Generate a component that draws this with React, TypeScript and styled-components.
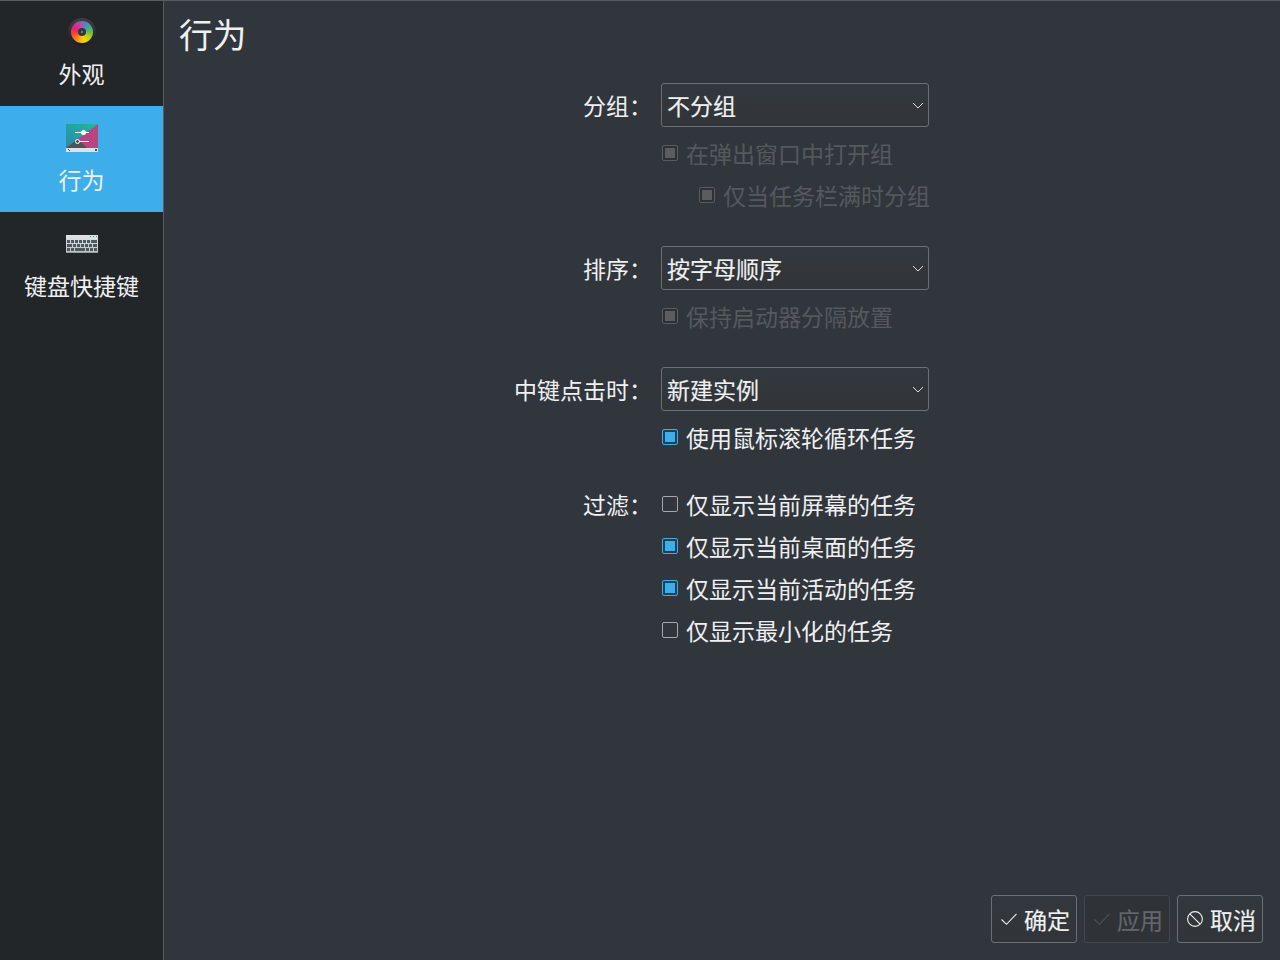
import React from "react";
import styled, { createGlobalStyle } from "styled-components";

const GlobalStyle = createGlobalStyle`
  * { box-sizing: border-box; }
  body {
    margin: 0;
    background: #31363d;
    color: #eff0f1;
    font-family: "Noto Sans CJK SC", sans-serif;
    font-size: 23px;
    line-height: 34px;
  }
`;

const Window = styled.div`
  display: flex;
  width: 1280px;
  height: 960px;
  overflow: hidden;
  border-top: 1px solid #575c60;
`;

const Sidebar = styled.nav`
  width: 164px;
  flex: none;
  background: #232629;
  border-right: 1px solid #575c60;
`;

const Category = styled.div<{ $active?: boolean; $first?: boolean }>`
  display: flex;
  flex-direction: column;
  align-items: center;
  gap: 8px;
  height: ${(p) => (p.$first ? 105 : 106)}px;
  padding-top: ${(p) => (p.$first ? 15 : 16)}px;
  background: ${(p) => (p.$active ? "#3daee9" : "transparent")};
`;

const CategoryIcon = styled.svg`
  display: block;
  width: 32px;
  height: 32px;
`;

const ColorDisc = styled.div`
  display: flex;
  align-items: center;
  justify-content: center;
  width: 32px;
  height: 32px;
`;

const DiscRim = styled.div`
  width: 28px;
  height: 28px;
  padding: 3px;
  border-radius: 50%;
  background: linear-gradient(#3b4045, #1d1f21);
`;

const DiscHue = styled.div`
  display: flex;
  align-items: center;
  justify-content: center;
  width: 22px;
  height: 22px;
  border-radius: 50%;
  background: conic-gradient(#8d63b8, #5c86b8 30deg, #3cae94 60deg, #6cbd45 90deg, #c3d210 130deg, #f2d508 165deg, #f9b80a 190deg, #fa7a1c 225deg, #f4433c 260deg, #ea1f72 295deg, #c43c9b 330deg, #8d63b8);
`;

const DiscHub = styled.div`
  width: 8px;
  height: 8px;
  border: 3px solid #33373b;
  border-radius: 50%;
  background: #8b9093;
`;

const Main = styled.main`
  display: flex;
  flex: 1;
  flex-direction: column;
`;

const Title = styled.h1`
  margin: 0;
  padding: 9px 0 0 15px;
  height: 82px;
  font-size: 33.7px;
  font-weight: 400;
  line-height: 48px;
`;

const Form = styled.div`
  display: grid;
  grid-template-columns: 488px 270px;
  column-gap: 9px;
  row-gap: 30px;
`;

const Label = styled.div<{ $compact?: boolean }>`
  height: ${(p) => (p.$compact ? 42 : 44)}px;
  line-height: ${(p) => (p.$compact ? 42 : 44)}px;
  text-align: right;
`;

const Group = styled.div`
  display: flex;
  flex-direction: column;
`;

const FilterLabel = styled(Label)`
  margin-top: -5px;
`;

const FilterGroup = styled(Group)`
  margin-top: -5px;
`;

const Select = styled.div`
  display: flex;
  align-items: center;
  justify-content: space-between;
  width: 268px;
  height: 44px;
  margin-bottom: 5px;
  padding: 0 4px 0 5px;
  border: 1px solid #6c7073;
  border-radius: 3px;
  background: linear-gradient(#33383e, #313539);
  -webkit-text-stroke: 0.15px currentColor;
`;

const Chevron = styled.svg`
  width: 12px;
  height: 8px;
  margin-top: 1px;
`;

const CheckRow = styled.div<{ $disabled?: boolean; $indent?: boolean }>`
  display: flex;
  align-items: center;
  gap: 8px;
  height: 42px;
  padding-left: ${(p) => (p.$indent ? 38 : 1)}px;
  color: ${(p) => (p.$disabled ? "#55595e" : "#eff0f1")};
  white-space: nowrap;
`;

const CheckText = styled.span`
  margin-top: -1px;
`;

const boxColors = {
  on: { border: "#3daee9", back: "#1c4258", fill: "#3daee9" },
  off: { border: "#a5a8aa", back: "transparent", fill: "transparent" },
  disabled: { border: "#585c60", back: "#2d3136", fill: "#595d60" },
};

type BoxState = keyof typeof boxColors;

const Box = styled.div<{ $state: BoxState }>`
  flex: none;
  width: 16px;
  height: 16px;
  padding: 2px;
  border: 1px solid ${(p) => boxColors[p.$state].border};
  border-radius: 2px;
  background: ${(p) => boxColors[p.$state].back};

  &::after {
    content: "";
    display: block;
    width: 10px;
    height: 10px;
    background: ${(p) => boxColors[p.$state].fill};
  }
`;

const Footer = styled.footer`
  display: flex;
  justify-content: flex-end;
  gap: 7px;
  margin-top: auto;
  padding: 0 17px 17px 0;
`;

const Button = styled.div<{ $disabled?: boolean }>`
  display: flex;
  align-items: center;
  gap: 7px;
  width: 86px;
  height: 48px;
  padding-left: 9px;
  border: 1px solid ${(p) => (p.$disabled ? "#42464b" : "#6c7073")};
  border-radius: 3px;
  background: ${(p) => (p.$disabled ? "#2f3338" : "linear-gradient(#33383e, #313539)")};
  color: ${(p) => (p.$disabled ? "#63676b" : "#eff0f1")};
  -webkit-text-stroke: 0.15px currentColor;
  white-space: nowrap;
`;

const ButtonIcon = styled.svg<{ $dim?: boolean }>`
  flex: none;
  width: 16px;
  height: 16px;
  opacity: ${(p) => (p.$dim ? 0.6 : 1)};
`;

const ButtonText = styled.span`
  margin-top: -1px;
`;

function BehaviorIcon() {
  return (
    <CategoryIcon viewBox="0 0 32 32">
      <defs>
        <linearGradient id="teal" x1="0" y1="1" x2="1" y2="0">
          <stop offset="0" stopColor="#2d87ad" />
          <stop offset="1" stopColor="#1abc9c" />
        </linearGradient>
      </defs>
      <path d="M0 2h32v24H0z" fill="url(#teal)" />
      <path d="M32 2v24H0z" fill="#b8457f" />
      <path d="M0 26 12 17l9 9z" fill="#4b555b" />
      <path d="M0 26h32v4H0z" fill="#dfe1e2" />
      <path d="M2 27h1v1h1v1H3v-1H2zM29 27h2v2h-2z" fill="#4d4d4d" />
      <path d="M9 10.5h14M13 19.5h10" stroke="#fff" />
      <circle cx="17.5" cy="10.5" r="2.5" fill="#fff" />
      <circle cx="11.5" cy="19.5" r="2" fill="none" stroke="#fff" />
    </CategoryIcon>
  );
}

const keyRows: [number, number[]][] = [
  [12, [1, 5, 9, 13, 17, 21, 25]],
  [16, [1, 7, 11, 15, 19, 23, 27]],
  [20, [1, 5, 9, 20, 24, 28]],
];

const keyWidths: Record<string, number> = {
  "12-25": 6,
  "16-1": 5,
  "16-27": 4,
  "20-9": 10,
};

function KeyboardIcon() {
  return (
    <CategoryIcon viewBox="0 0 32 32">
      <defs>
        <linearGradient id="keys" x1="0" y1="0" x2="0" y2="1">
          <stop offset="0" stopColor="#e2e5e7" />
          <stop offset="1" stopColor="#bcc1c4" />
        </linearGradient>
      </defs>
      <path d="M0 7h32v18H0z" fill="url(#keys)" />
      <path d="M0 24h32v1H0z" fill="#94a0a3" />
      <path d="M24 8h1v1h-1zM27 8h1v1h-1zM30 8h1v1h-1z" fill="#1b9f85" />
      {keyRows.map(([y, xs]) =>
        xs.map((x) => (
          <rect key={`${y}-${x}`} x={x} y={y} width={keyWidths[`${y}-${x}`] ?? 3} height="3" fill="#4f5a60" />
        ))
      )}
    </CategoryIcon>
  );
}

function Combo({ value }: { value: string }) {
  return (
    <Select>
      <span>{value}</span>
      <Chevron viewBox="0 0 12 8" fill="none" stroke="#dcdee0" strokeWidth="1">
        <path d="m1 1 5 5 5-5" />
      </Chevron>
    </Select>
  );
}

function Check({ state, indent, text }: { state: BoxState; indent?: boolean; text: string }) {
  return (
    <CheckRow $disabled={state === "disabled"} $indent={indent}>
      <Box $state={state} />
      <CheckText>{text}</CheckText>
    </CheckRow>
  );
}

function Tick({ dim }: { dim?: boolean }) {
  return (
    <ButtonIcon $dim={dim} viewBox="0 0 16 16" fill="none" stroke="currentColor" strokeWidth="1.1">
      <path d="M.5 8.5 5.5 13.3 15.5 2.8" />
    </ButtonIcon>
  );
}

export default function App() {
  return (
    <>
      <GlobalStyle />
      <Window>
        <Sidebar>
          <Category $first>
            <ColorDisc>
              <DiscRim>
                <DiscHue>
                  <DiscHub />
                </DiscHue>
              </DiscRim>
            </ColorDisc>
            外观
          </Category>
          <Category $active>
            <BehaviorIcon />
            行为
          </Category>
          <Category>
            <KeyboardIcon />
            键盘快捷键
          </Category>
        </Sidebar>
        <Main>
          <Title>行为</Title>
          <Form>
            <Label>分组：</Label>
            <Group>
              <Combo value="不分组" />
              <Check state="disabled" text="在弹出窗口中打开组" />
              <Check state="disabled" indent text="仅当任务栏满时分组" />
            </Group>
            <Label>排序：</Label>
            <Group>
              <Combo value="按字母顺序" />
              <Check state="disabled" text="保持启动器分隔放置" />
            </Group>
            <Label>中键点击时：</Label>
            <Group>
              <Combo value="新建实例" />
              <Check state="on" text="使用鼠标滚轮循环任务" />
            </Group>
            <FilterLabel $compact>过滤：</FilterLabel>
            <FilterGroup>
              <Check state="off" text="仅显示当前屏幕的任务" />
              <Check state="on" text="仅显示当前桌面的任务" />
              <Check state="on" text="仅显示当前活动的任务" />
              <Check state="off" text="仅显示最小化的任务" />
            </FilterGroup>
          </Form>
          <Footer>
            <Button>
              <Tick />
              <ButtonText>确定</ButtonText>
            </Button>
            <Button $disabled>
              <Tick dim />
              <ButtonText>应用</ButtonText>
            </Button>
            <Button>
              <ButtonIcon viewBox="0 0 16 16" fill="none" stroke="currentColor" strokeWidth="1.1">
                <circle cx="8" cy="8" r="7.4" />
                <path d="m2.8 2.8 10.4 10.4" />
              </ButtonIcon>
              <ButtonText>取消</ButtonText>
            </Button>
          </Footer>
        </Main>
      </Window>
    </>
  );
}
